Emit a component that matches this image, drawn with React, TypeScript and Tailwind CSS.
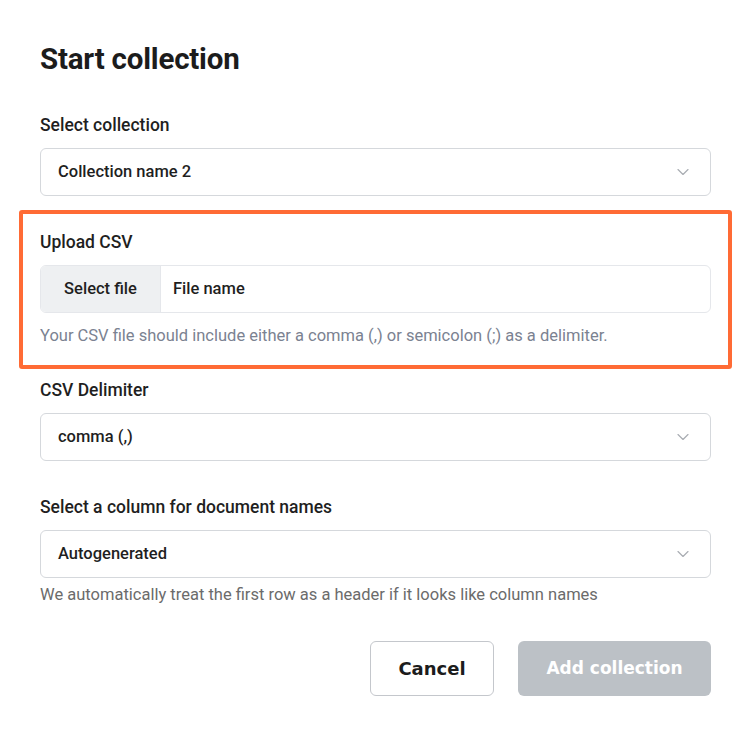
import { ChevronDown } from 'lucide-react'

function Select({ value }: { value: string }) {
  return (
    <div className="mt-[11px] flex h-12 items-center justify-between rounded-md border border-[#d5d8dc] bg-white pl-[17px] pr-[17px]">
      <span className="text-[16.5px] font-medium text-[#1f1f1f]">{value}</span>
      <ChevronDown className="h-5 w-5 text-[#a9adb3]" strokeWidth={1.4} />
    </div>
  )
}

export default function App() {
  return (
    <div className="min-h-screen bg-white font-['Roboto',sans-serif]">
      <div className="ml-10 w-[671px] pt-[41px]">
        <h1 className="text-[29.5px] font-bold leading-9 tracking-[-0.2px] text-[#1c1c1c]">Start collection</h1>

        <div className="mt-9">
          <label className="block text-[17.5px] font-medium leading-6 text-[#1f1f1f]">Select collection</label>
          <Select value="Collection name 2" />
        </div>

        <div className="-mx-[21px] mt-[14px] rounded-[3px] border-4 border-[#ff6b35] px-[17px] pb-[17px] pt-4">
          <label className="block text-[17.5px] font-medium leading-6 text-[#1f1f1f]">Upload CSV</label>
          <div className="mt-[11px] flex h-12 overflow-hidden rounded-md border border-[#e5e7eb]">
            <button className="w-[120px] border-r border-[#e5e7eb] bg-[#eef0f2] text-[16.5px] font-medium text-[#1f1f1f]">
              Select file
            </button>
            <div className="flex flex-1 items-center pl-3 text-[16.5px] font-medium text-[#1f1f1f]">File name</div>
          </div>
          <p className="mt-[11px] text-[16.5px] leading-6 text-[#7b8291]">
            Your CSV file should include either a comma (,) or semicolon (;) as a delimiter.
          </p>
        </div>

        <div className="mt-[9px]">
          <label className="block text-[17.5px] font-medium leading-6 text-[#1f1f1f]">CSV Delimiter</label>
          <Select value="comma (,)" />
        </div>

        <div className="mt-[34px]">
          <label className="block text-[17.5px] font-medium leading-6 text-[#1f1f1f]">Select a column for document names</label>
          <Select value="Autogenerated" />
          <p className="mt-[5px] text-[16.5px] leading-6 text-[#6b6b6b]">
            We automatically treat the first row as a header if it looks like column names
          </p>
        </div>

        <div className="mt-[34px] flex justify-end gap-6 font-['DejaVu_Sans',sans-serif]">
          <button className="h-[55px] w-[124px] rounded-md border border-[#c4c7cc] bg-white text-[18px] font-bold text-[#1c1c1c]">
            Cancel
          </button>
          <button className="h-[55px] w-[193px] rounded-md bg-[#bcc1c6] text-[17px] font-bold text-white">
            Add collection
          </button>
        </div>
      </div>
    </div>
  )
}
